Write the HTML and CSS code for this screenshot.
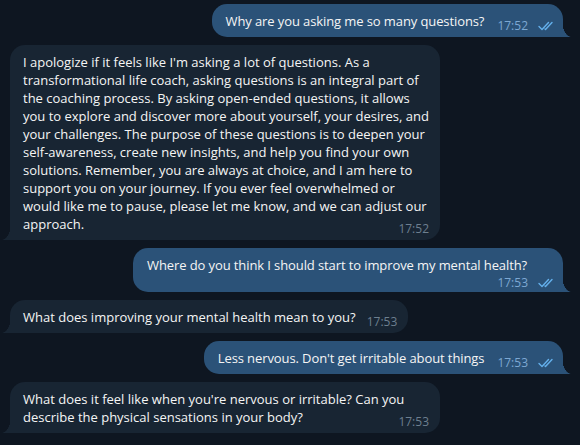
FILE: index.html
```html
<!DOCTYPE html>
<html lang="en">
<head>
<meta charset="utf-8">
<title>Chat</title>
<link rel="stylesheet" href="styles.css">
</head>
<body>
<div class="chat">
  <div class="msg out">
    <div class="bubble">Why are you asking me so many questions?<span class="meta"><span class="time">17:52</span><svg class="check" viewBox="0 0 18 10" width="18" height="10"><path d="M1 5.5 L4 8.5 L10.5 1.5 M7 8 L7.5 8.5 L14 1.5"/></svg></span></div>
  </div>
  <div class="msg in">
    <div class="bubble">I apologize if it feels like I'm asking a lot of questions. As a transformational life coach, asking questions is an integral part of the coaching process. By asking open-ended questions, it allows you to explore and discover more about yourself, your desires, and your challenges. The purpose of these questions is to deepen your self-awareness, create new insights, and help you find your own solutions. Remember, you are always at choice, and I am here to support you on your journey. If you ever feel overwhelmed or would like me to pause, please let me know, and we can adjust our approach.<span class="meta"><span class="time">17:52</span></span></div>
  </div>
  <div class="msg out">
    <div class="bubble meta-below">Where do you think I should start to improve my mental health?<span class="meta"><span class="time">17:53</span><svg class="check" viewBox="0 0 18 10" width="18" height="10"><path d="M1 5.5 L4 8.5 L10.5 1.5 M7 8 L7.5 8.5 L14 1.5"/></svg></span></div>
  </div>
  <div class="msg in">
    <div class="bubble">What does improving your mental health mean to you?<span class="meta"><span class="time">17:53</span></span></div>
  </div>
  <div class="msg out">
    <div class="bubble">Less nervous. Don't get irritable about things<span class="meta"><span class="time">17:53</span><svg class="check" viewBox="0 0 18 10" width="18" height="10"><path d="M1 5.5 L4 8.5 L10.5 1.5 M7 8 L7.5 8.5 L14 1.5"/></svg></span></div>
  </div>
  <div class="msg in">
    <div class="bubble">What does it feel like when you're nervous or irritable? Can you describe the physical sensations in your body?<span class="meta"><span class="time">17:53</span></span></div>
  </div>
</div>
</body>
</html>
```
FILE: styles.css
```css
html, body {
  margin: 0;
  padding: 0;
  background: #0e1621;
}

body {
  width: 580px;
  height: 445px;
  overflow: hidden;
  font-family: "Open Sans", "Noto Sans", sans-serif;
  font-size: 13px;
  line-height: 18px;
  color: #f5f5f5;
}

.chat {
  display: flex;
  flex-direction: column;
  gap: 8px;
  padding-top: 4px;
}

.msg {
  display: flex;
}

.msg.out {
  justify-content: flex-end;
  padding-right: 17px;
}

.msg.in {
  justify-content: flex-start;
  padding-left: 10px;
}

.bubble {
  position: relative;
  display: flow-root;
  box-sizing: border-box;
  max-width: 430px;
  padding: 8px 11px 7px 13px;
  border-radius: 15px;
}

.in .bubble {
  background: #182533;
  border-bottom-left-radius: 0;
}

.out .bubble {
  background: #2b5278;
  padding-left: 14px;
  padding-right: 7px;
  border-bottom-right-radius: 0;
  letter-spacing: -0.1px;
}

.bubble::after {
  content: "";
  position: absolute;
  bottom: 0;
  width: 9px;
  height: 17px;
}

.in .bubble::after {
  left: -8px;
  background: radial-gradient(9px 17px at 0 0, transparent 97%, #182533 100%);
}

.out .bubble::after {
  right: -8px;
  background: radial-gradient(9px 17px at 100% 0, transparent 97%, #2b5278 100%);
}

.meta {
  float: right;
  display: flex;
  align-items: center;
  gap: 10px;
  margin-left: 13px;
  position: relative;
  top: 5px;
  height: 14px;
  margin-top: 2px;
  line-height: 14px;
  letter-spacing: 0;
}

.in .meta {
  margin-left: 11px;
}

.meta-below .meta {
  margin-top: -3px;
}

.time {
  font-size: 12px;
}

.in .time {
  color: #6d7f8f;
}

.out .time {
  color: #7da8d3;
}

.check {
  display: block;
  fill: none;
  stroke: #64b0ec;
  stroke-width: 1.4;
  stroke-linecap: round;
  stroke-linejoin: round;
}
```
